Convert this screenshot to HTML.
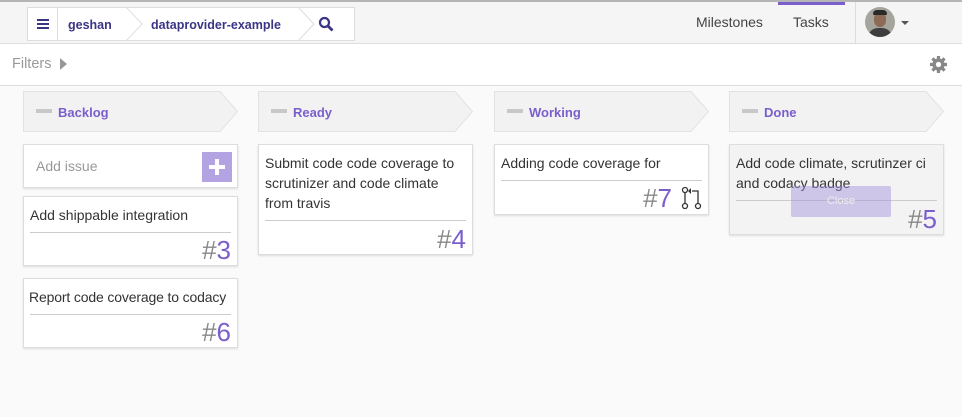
<!DOCTYPE html>
<html><head><style>
*{box-sizing:border-box;margin:0;padding:0}
body{width:962px;height:417px;background:#fafafa;font-family:"Liberation Sans",sans-serif;position:relative;overflow:hidden}
.top{position:absolute;left:0;top:0;width:962px;height:44px;background:#f5f5f5;border-top:2px solid #b5b5b5;border-bottom:1px solid #ddd}
.bc{position:absolute;left:27px;top:5px;width:328px;height:34px;background:#fff;border:1px solid #ddd;font-size:12.5px;font-weight:bold;color:#3b3585}
.bc span{position:absolute;top:10px}
.sep{position:absolute;top:-1px;width:1px;height:34px}
.filters{position:absolute;left:0;top:44px;width:962px;height:42px;background:#fff;border-bottom:1px solid #ddd}
.col{position:absolute;top:91px;width:216px}
.hd{position:relative;height:41px}
.hd svg{position:absolute;left:0;top:0}
.hd .t{position:absolute;left:35px;top:14px;font-size:13px;font-weight:bold;color:#7a5fcc}
.hd .d{position:absolute;left:13px;top:18px;width:16px;height:4px;background:#c8c8c8}
.card{position:absolute;left:0;width:215px;background:#fff;border:1px solid #ddd;box-shadow:0 1px 2px rgba(0,0,0,.12);font-size:14px;color:#333;line-height:20px}
.card .tx{padding:8px 6px 0 6px}
.card .ln{position:absolute;left:6px;right:6px;border-top:1px solid #ccc}
.card .num{position:absolute;right:6px;font-size:26px;color:#888;line-height:26px}
.card .num b{font-weight:normal;color:#7a5fcc}
</style></head><body>
<div class="top">
 <div class="bc">
  <div style="position:absolute;left:9px;top:11px;width:12px;height:2px;background:#3b3585;box-shadow:0 4px 0 #3b3585,0 8px 0 #3b3585"></div>
  <div class="sep" style="left:29px;background:#ddd"></div>
  <span style="left:40px">geshan</span>
  <svg style="position:absolute;left:98px;top:-1px" width="20" height="34"><path d="M0 0 L16 17 L0 34" fill="none" stroke="#ddd"/></svg>
  <span style="left:123px">dataprovider-example</span>
  <svg style="position:absolute;left:270px;top:-1px" width="20" height="34"><path d="M0 0 L16 17 L0 34" fill="none" stroke="#ddd"/></svg>
  <svg style="position:absolute;left:290px;top:8px" width="16" height="16"><circle cx="6.5" cy="6.5" r="4.5" fill="none" stroke="#3b3585" stroke-width="2.2"/><path d="M10 10 L14.5 14.5" stroke="#3b3585" stroke-width="2.8"/></svg>
 </div>
 <div style="position:absolute;left:696px;top:12px;font-size:14px;color:#444">Milestones</div>
 <div style="position:absolute;left:778px;top:0;width:67px;height:3px;background:#7a5fcc"></div>
 <div style="position:absolute;left:793px;top:12px;font-size:14px;color:#444">Tasks</div>
 <div style="position:absolute;left:855px;top:0;width:1px;height:42px;background:#ddd"></div>
 <div style="position:absolute;left:865px;top:5px;width:30px;height:30px;border-radius:50%;overflow:hidden;background:#a5a59d">
  <div style="position:absolute;left:9px;top:5px;width:12px;height:15px;border-radius:45%;background:#8d6a55"></div>
  <div style="position:absolute;left:8px;top:3px;width:14px;height:5px;border-radius:6px 6px 2px 2px;background:#2a2a2a"></div>
  <div style="position:absolute;left:3px;top:21px;width:24px;height:12px;border-radius:10px 10px 0 0;background:#3d3d3d"></div>
 </div>
 <div style="position:absolute;left:901px;top:19px;border:4px solid transparent;border-top:4px solid #555"></div>
</div>
<div class="filters">
 <span style="position:absolute;left:12px;top:12px;font-size:14.5px;color:#999">Filters</span>
 <div style="position:absolute;left:60px;top:14px;border:6px solid transparent;border-left:7px solid #999;border-right:0"></div>
 <svg style="position:absolute;left:929px;top:11px" width="19" height="19" viewBox="0 0 20 20"><g fill="#888"><circle cx="10" cy="10" r="6.5"/><g stroke="#888" stroke-width="3.4"><path d="M10 1v18M1 10h18M3.6 3.6l12.8 12.8M16.4 3.6L3.6 16.4"/></g></g><circle cx="10" cy="10" r="2.8" fill="#fff"/></svg>
</div>

<div class="col" style="left:23px">
 <div class="hd"><svg width="216" height="41"><path d="M0.5 0.5H197L214.5 20.5L197 40.5H0.5Z" fill="#f2f2f2" stroke="#e2e2e2"/></svg><div class="d"></div><div class="t">Backlog</div></div>
 <div class="card" style="top:53px;height:44px"><span style="position:absolute;left:12px;top:11px;color:#999">Add issue</span><div style="position:absolute;left:178px;top:7px;width:30px;height:30px;background:#b3a3e3"><div style="position:absolute;left:7px;top:13px;width:16px;height:4px;background:#fff"></div><div style="position:absolute;left:13px;top:7px;width:4px;height:16px;background:#fff"></div></div></div>
 <div class="card" style="top:105px;height:70px"><div class="tx">Add shippable integration</div><div class="ln" style="top:35px"></div><div class="num" style="top:40px">#<b>3</b></div></div>
 <div class="card" style="top:187px;height:70px"><div class="tx" style="white-space:nowrap;padding-left:5px;letter-spacing:-0.15px">Report code coverage to codacy</div><div class="ln" style="top:35px"></div><div class="num" style="top:40px">#<b>6</b></div></div>
</div>

<div class="col" style="left:258px">
 <div class="hd"><svg width="216" height="41"><path d="M0.5 0.5H197L214.5 20.5L197 40.5H0.5Z" fill="#f2f2f2" stroke="#e2e2e2"/></svg><div class="d"></div><div class="t">Ready</div></div>
 <div class="card" style="top:53px;height:111px"><div class="tx">Submit code code coverage to<br>scrutinizer and code climate<br>from travis</div><div class="ln" style="top:75px"></div><div class="num" style="top:81px">#<b>4</b></div></div>
</div>

<div class="col" style="left:494px">
 <div class="hd"><svg width="216" height="41"><path d="M0.5 0.5H197L214.5 20.5L197 40.5H0.5Z" fill="#f2f2f2" stroke="#e2e2e2"/></svg><div class="d"></div><div class="t">Working</div></div>
 <div class="card" style="top:53px;height:71px"><div class="tx">Adding code coverage for</div><div class="ln" style="top:35px"></div><div class="num" style="top:40px;right:36px">#<b>7</b></div>
  <svg style="position:absolute;left:186px;top:41px" width="24" height="24"><g fill="none" stroke="#333" stroke-width="1.3"><circle cx="4" cy="4" r="2.5"/><circle cx="4" cy="20" r="2.5"/><circle cx="17" cy="20" r="2.5"/><path d="M4 6.5V17.5M17 17.5V5H11"/></g><path d="M10 2L7 5L10 8Z" fill="#333"/></svg>
 </div>
</div>

<div class="col" style="left:729px">
 <div class="hd"><svg width="216" height="41"><path d="M0.5 0.5H197L214.5 20.5L197 40.5H0.5Z" fill="#f2f2f2" stroke="#e2e2e2"/></svg><div class="d"></div><div class="t">Done</div></div>
 <div class="card" style="top:53px;height:91px;background:#f3f3f3"><div class="tx">Add code climate, scrutinzer ci<br>and codacy badge</div><div class="ln" style="top:55px"></div><div class="num" style="top:61px">#<b>5</b></div>
  <div style="position:absolute;left:61px;top:41px;width:100px;height:31px;background:rgba(160,145,220,.45);border-radius:2px;color:#eee;font-size:11px;text-align:center;line-height:31px">Close</div>
 </div>
</div>
</body></html>
